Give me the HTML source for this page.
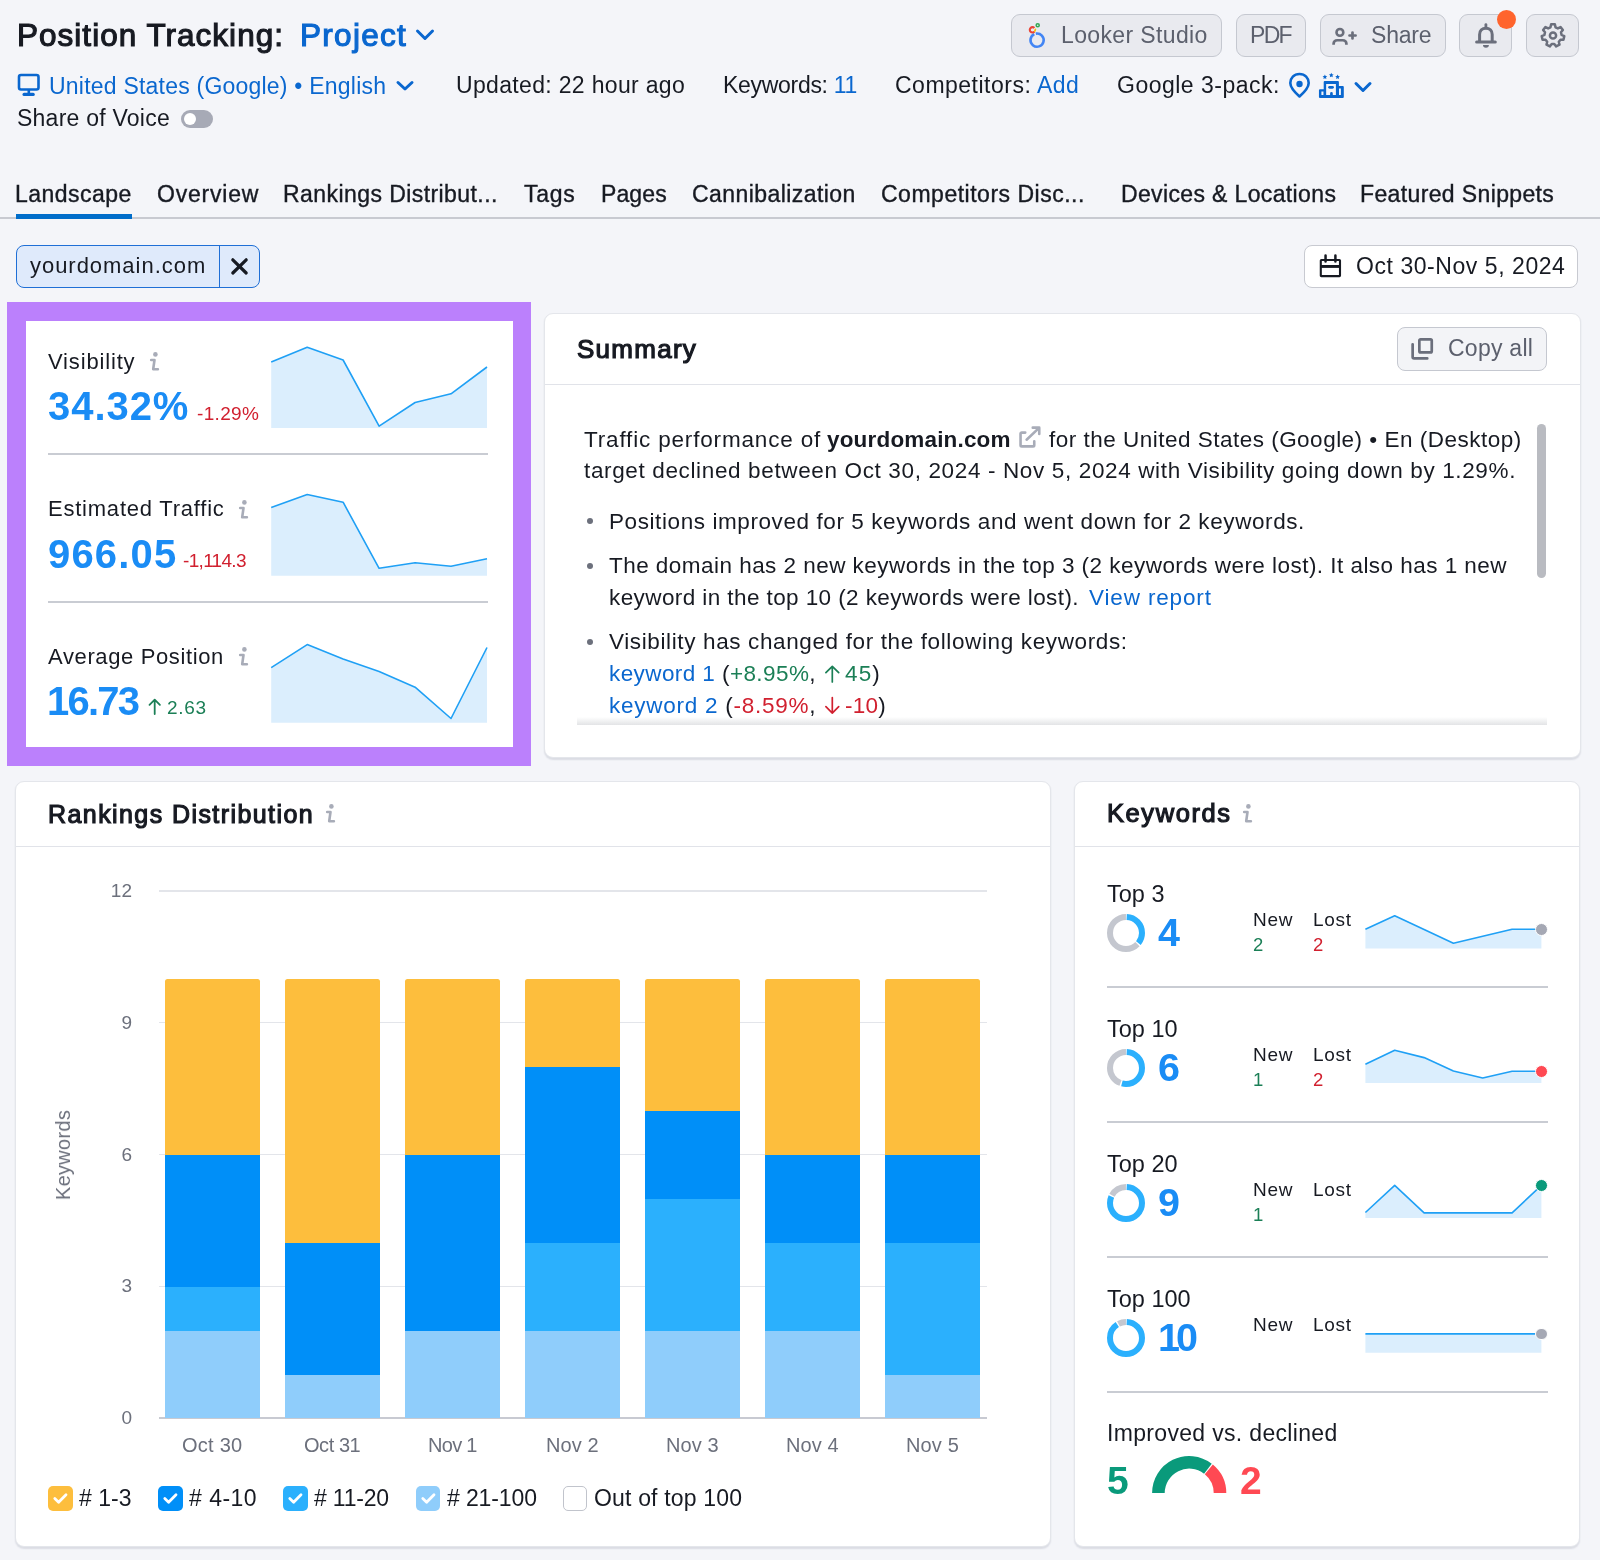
<!DOCTYPE html>
<html><head><meta charset="utf-8"><style>
html,body{margin:0;padding:0}
body{width:1600px;height:1560px;background:#f4f5f9;position:relative;overflow:hidden;font-family:"Liberation Sans",sans-serif;color:#171a22}
.a{position:absolute}
.t{position:absolute;white-space:nowrap;line-height:1;will-change:transform}
.btn{box-sizing:border-box;border:1.6px solid #c5c8d0;border-radius:9px;background:#e9eaef}
.card{box-sizing:border-box;background:#fff;border:1px solid #e4e6eb;border-radius:9px;box-shadow:0 1.5px 1.5px rgba(40,50,80,0.12)}
</style></head><body>

<svg class='a' style='left:415px;top:28px' width='20' height='14'><path d='M2.5 3 L10 10.5 L17.5 3' fill='none' stroke='#0a67cf' stroke-width='3' stroke-linecap='round' stroke-linejoin='round'/></svg>
<svg class='a' style='left:17px;top:73px' width='24' height='24'><rect x='2' y='2' width='19.5' height='14.5' rx='2' fill='none' stroke='#0a67cf' stroke-width='2.6'/><rect x='10.5' y='16' width='2.6' height='4' fill='#0a67cf'/><rect x='5.5' y='19.8' width='12.3' height='3.2' rx='1.6' fill='#0a67cf'/></svg>
<svg class='a' style='left:395px;top:79px' width='20' height='14'><path d='M3 3.5 L10 10 L17 3.5' fill='none' stroke='#0a67cf' stroke-width='3' stroke-linecap='round' stroke-linejoin='round'/></svg>
<svg class='a' style='left:1287px;top:71px' width='26' height='28'><path d='M12.5 3 C7 3 3.3 7 3.3 12 C3.3 17 8 21.5 12.5 25.5 C17 21.5 21.7 17 21.7 12 C21.7 7 18 3 12.5 3 Z' fill='none' stroke='#0a67cf' stroke-width='2.6' stroke-linejoin='round'/><circle cx='12.5' cy='13' r='3.2' fill='#0a67cf'/></svg>
<svg class='a' style='left:1314px;top:68px' width='36' height='34'>
<path fill-rule='evenodd' fill='#0a67cf' d='M4.95 28.9 V22.2 Q4.95 21.15 6 21.15 H9.7 V14 Q9.7 13.05 10.7 13.05 H23.9 Q24.9 13.05 24.9 14 V18 H28.8 Q29.8 18 29.8 19 V28.9 Q29.8 29.9 28.8 29.9 H6 Q4.95 29.9 4.95 28.9 Z M7.4 23.6 H9.45 V27 H7.4 Z M12.15 16 H21.9 V27 H18.8 V25.4 Q18.8 24.1 17.45 24.1 Q16.1 24.1 16.1 25.4 V27 H12.15 Z M25 20.5 H26.9 V27 H25 Z'/>
<rect x='14.2' y='18' width='5.7' height='2.7' rx='1.35' fill='#0a67cf'/>
<path fill='#0a67cf' d='M10.90 6.50 L11.61 8.03 L13.28 8.23 L12.04 9.37 L12.37 11.02 L10.90 10.20 L9.43 11.02 L9.76 9.37 L8.52 8.23 L10.19 8.03Z M17.30 4.70 L18.01 6.23 L19.68 6.43 L18.44 7.57 L18.77 9.22 L17.30 8.40 L15.83 9.22 L16.16 7.57 L14.92 6.43 L16.59 6.23Z M23.60 6.50 L24.31 8.03 L25.98 8.23 L24.74 9.37 L25.07 11.02 L23.60 10.20 L22.13 11.02 L22.46 9.37 L21.22 8.23 L22.89 8.03Z'/>
</svg>
<svg class='a' style='left:1353px;top:80px' width='20' height='14'><path d='M3 3.5 L10 10.5 L17 3.5' fill='none' stroke='#0a67cf' stroke-width='3' stroke-linecap='round' stroke-linejoin='round'/></svg>
<div class='a' style='left:181px;top:110px;width:32px;height:18px;border-radius:9px;background:#a7aab6'></div><div class='a' style='left:184px;top:113px;width:12px;height:12px;border-radius:6px;background:#fff'></div>
<div class='a btn' style='left:1011.4px;top:14px;width:210.60000000000002px;height:43.4px'></div>
<div class='a btn' style='left:1235.6px;top:14px;width:70.40000000000009px;height:43.4px'></div>
<div class='a btn' style='left:1320px;top:14px;width:125.59999999999991px;height:43.4px'></div>
<div class='a btn' style='left:1459.3px;top:14px;width:53.200000000000045px;height:43.4px'></div>
<div class='a btn' style='left:1526px;top:14px;width:53px;height:43.4px'></div>
<svg class='a' style='left:1024px;top:20px' width='26' height='30'>
<path d='M11.81 13.62 A6.6 6.6 0 1 1 10.28 14.12' fill='none' stroke='#4285f4' stroke-width='2.6'/>
<path d='M10.4 11.7 A2.7 2.7 0 1 1 10.4 7.9' fill='none' stroke='#ea4335' stroke-width='2.1'/>
<circle cx='13.7' cy='5.2' r='1.55' fill='none' stroke='#34a853' stroke-width='1.5'/>
<ellipse cx='11.1' cy='10.3' rx='0.95' ry='1.9' transform='rotate(20 11.1 10.3)' fill='#fbbc04'/>
</svg>
<svg class='a' style='left:1330px;top:25px' width='30' height='22'>
<circle cx='9.9' cy='7.4' r='3.4' fill='none' stroke='#6b6f7c' stroke-width='2.6'/>
<path d='M3.6 19.75 V18.8 C3.6 16.8 5.2 15.25 7.2 15.25 H12.8 C14.8 15.25 16.4 16.8 16.4 18.8 V19.75' fill='none' stroke='#6b6f7c' stroke-width='2.7'/>
<path d='M19.5 10.5 H25.6 M22.5 7.6 V13.4' stroke='#6b6f7c' stroke-width='2.7' stroke-linecap='round'/>
</svg>
<svg class='a' style='left:1473px;top:21px' width='26' height='29'>
<path d='M12.9 3.6 V6.8' stroke='#6b6f7c' stroke-width='2.8' stroke-linecap='round'/>
<path d='M6.6 21 V13.5 C6.6 9.6 9.2 7.3 12.9 7.3 C16.6 7.3 19.2 9.6 19.2 13.5 V21' fill='none' stroke='#6b6f7c' stroke-width='3'/>
<path d='M3.6 21 H22.3' stroke='#6b6f7c' stroke-width='3' stroke-linecap='round'/>
<path d='M10 24.1 H15.9 A2.95 2.7 0 0 1 10 24.1 Z' fill='#6b6f7c'/>
</svg>
<div class='a' style='left:1497px;top:10px;width:19px;height:19px;border-radius:50%;background:#ff642d'></div>
<svg class='a' style='left:1539.5px;top:22px' width='26' height='27'>
<polygon points='10.49,5.28 11.13,2.35 14.87,2.35 15.51,5.28 17.86,6.41 20.55,5.09 22.88,8.01 21.00,10.34 21.58,12.88 24.28,14.16 23.45,17.80 20.46,17.78 18.83,19.82 19.52,22.73 16.16,24.35 14.30,22.00 11.70,22.00 9.84,24.35 6.48,22.73 7.17,19.82 5.54,17.78 2.55,17.80 1.72,14.16 4.42,12.88 5.00,10.34 3.12,8.01 5.45,5.09 8.14,6.41' fill='none' stroke='#6b6f7c' stroke-width='2.5' stroke-linejoin='round'/>
<circle cx='13' cy='13.5' r='3.1' fill='none' stroke='#6b6f7c' stroke-width='2.5'/>
</svg>
<div class='a' style='left:0;top:217px;width:1600px;height:2px;background:#c8cad1'></div>
<div class='a' style='left:16px;top:214px;width:116px;height:4.7px;background:#006dca'></div>
<div class='a' style='left:16.2px;top:244.8px;width:243.5px;height:43px;box-sizing:border-box;border:1.6px solid #1f6fd6;border-radius:8px;background:#dfeafb'></div>
<div class='a' style='left:218.6px;top:245.5px;width:1.5px;height:41.5px;background:#1f6fd6'></div>
<svg class='a' style='left:230px;top:257px' width='20' height='19'><path d='M2.8 2.8 L16.2 16 M16.2 2.8 L2.8 16' stroke='#171a22' stroke-width='3.2' stroke-linecap='round'/></svg>
<div class='a' style='left:1304.4px;top:244.8px;width:274px;height:43px;box-sizing:border-box;border:1.6px solid #c8cad1;border-radius:8px;background:#fff'></div>
<svg class='a' style='left:1318px;top:252px' width='25' height='27'>
<rect x='2.8' y='8' width='19.2' height='16.1' rx='0.6' fill='none' stroke='#171a22' stroke-width='2.1'/>
<rect x='2.8' y='13' width='19.2' height='2.9' fill='#171a22'/>
<path d='M7.55 3.45 V9.55 M17.4 3.45 V9.55' stroke='#171a22' stroke-width='2.5' stroke-linecap='round'/>
</svg>
<div class='a' style='left:7.4px;top:302px;width:523.6px;height:464px;background:#bb80fc'></div>
<div class='a' style='left:26px;top:321px;width:486.6px;height:426.3px;background:#fff'></div>
<svg class='a' style='left:148px;top:350px' width='14' height='24'><circle cx='7.4' cy='4.4' r='2.3' fill='#a8acb8'/><path d='M3.2 10 H6.5 L5.2 19.3 H9.9' fill='none' stroke='#a8acb8' stroke-width='2.6' stroke-linecap='round' stroke-linejoin='round'/></svg>
<svg class='a' style='left:237px;top:497.5px' width='14' height='24'><circle cx='7.4' cy='4.4' r='2.3' fill='#a8acb8'/><path d='M3.2 10 H6.5 L5.2 19.3 H9.9' fill='none' stroke='#a8acb8' stroke-width='2.6' stroke-linecap='round' stroke-linejoin='round'/></svg>
<svg class='a' style='left:236.5px;top:645px' width='14' height='24'><circle cx='7.4' cy='4.4' r='2.3' fill='#a8acb8'/><path d='M3.2 10 H6.5 L5.2 19.3 H9.9' fill='none' stroke='#a8acb8' stroke-width='2.6' stroke-linecap='round' stroke-linejoin='round'/></svg>
<div class='a' style='left:48px;top:453.4px;width:440.3px;height:1.6px;background:#c9ccd3'></div>
<div class='a' style='left:48px;top:601.2px;width:440.3px;height:1.6px;background:#c9ccd3'></div>
<svg class='a' style='left:147px;top:697px' width='16' height='19'><path d='M7.7 17 V2.6 M2.5 7.8 L7.7 2.6 L12.9 7.8' fill='none' stroke='#1b7f56' stroke-width='1.8' stroke-linecap='round' stroke-linejoin='round'/></svg>
<div class='a card' style='left:544.0px;top:313.2px;width:1036.6px;height:445.00000000000006px'></div>
<div class='a' style='left:545.0px;top:383.6px;width:1034.6px;height:1.5px;background:#e1e3e9'></div>
<div class='a' style='left:1397.3px;top:327.2px;width:149.7px;height:43.6px;box-sizing:border-box;border:1.6px solid #c5c8d0;border-radius:8px;background:#f3f4f7'></div>
<svg class='a' style='left:1410px;top:337px' width='25' height='24'>
<rect x='9.35' y='2.35' width='12.4' height='13' rx='1.2' fill='none' stroke='#6b6f7c' stroke-width='2.7'/>
<path d='M2.65 7.25 V20 Q2.65 21.45 4.1 21.45 H17.25' fill='none' stroke='#6b6f7c' stroke-width='2.7' stroke-linecap='round'/>
</svg>
<svg class='a' style='left:1017px;top:424px' width='26' height='26'>
<path d='M8.25 8.6 H4.75 Q3.55 8.6 3.55 9.8 V21.15 Q3.55 22.35 4.75 22.35 H16.05 Q17.25 22.35 17.25 21.15 V17.35' fill='none' stroke='#a8acb8' stroke-width='2.6' stroke-linecap='round'/>
<path d='M15.75 3.65 H22.25 V9.95 M21.8 4.1 L9.6 15.7' fill='none' stroke='#a8acb8' stroke-width='2.6' stroke-linecap='round' stroke-linejoin='round'/>
</svg>
<div class='a' style='left:587px;top:517.7px;width:6px;height:6px;border-radius:50%;background:#6c707c'></div>
<div class='a' style='left:587px;top:563px;width:6px;height:6px;border-radius:50%;background:#6c707c'></div>
<div class='a' style='left:587px;top:639.2px;width:6px;height:6px;border-radius:50%;background:#6c707c'></div>
<div class='a' style='left:1537.3px;top:423.7px;width:8.7px;height:154.5px;border-radius:4.5px;background:#b9bbc1'></div>
<div class='a' style='left:577px;top:716.5px;width:970px;height:8.5px;background:linear-gradient(#fff,#e3e4e6)'></div>
<svg class='a' style='left:823px;top:664px' width='18' height='20'><path d='M9.3 17.9 V2.3 M2.9 8.7 L9.3 2.3 L15.7 8.7' fill='none' stroke='#1b7f56' stroke-width='1.7' stroke-linecap='round' stroke-linejoin='round'/></svg>
<svg class='a' style='left:823px;top:696px' width='18' height='20'><path d='M9.3 1.5 V17.1 M2.9 10.7 L9.3 17.1 L15.7 10.7' fill='none' stroke='#d1202f' stroke-width='1.7' stroke-linecap='round' stroke-linejoin='round'/></svg>
<div class='a card' style='left:14.8px;top:781.0px;width:1036.2px;height:765.5px'></div>
<div class='a' style='left:15.8px;top:845.5px;width:1034.2px;height:1.5px;background:#e1e3e9'></div>
<svg class='a' style='left:323.5px;top:801.5px' width='14' height='24'><circle cx='7.4' cy='4.4' r='2.3' fill='#a8acb8'/><path d='M3.2 10 H6.5 L5.2 19.3 H9.9' fill='none' stroke='#a8acb8' stroke-width='2.6' stroke-linecap='round' stroke-linejoin='round'/></svg>
<div class='a' style='left:158.8px;top:890.25px;width:828px;height:1.5px;background:#e3e5ea'></div>
<div class='a' style='left:158.8px;top:1021.95px;width:828px;height:1.5px;background:#e3e5ea'></div>
<div class='a' style='left:158.8px;top:1153.75px;width:828px;height:1.5px;background:#e3e5ea'></div>
<div class='a' style='left:158.8px;top:1285.65px;width:828px;height:1.5px;background:#e3e5ea'></div>
<div class='a' style='left:158.8px;top:1417px;width:828px;height:2px;background:#c8cad2'></div>
<div class='a' style='left:164.6px;top:1330.17px;width:95.7px;height:87.83px;background:#8fcdfb;'></div>
<div class='a' style='left:164.6px;top:1286.25px;width:95.7px;height:44.52px;background:#2bb0fd;'></div>
<div class='a' style='left:164.6px;top:1154.50px;width:95.7px;height:132.35px;background:#008ff8;'></div>
<div class='a' style='left:164.6px;top:978.83px;width:95.7px;height:176.27px;background:#fdbe3d;border-radius:2.5px 2.5px 0 0;'></div>
<div class='a' style='left:284.6px;top:1374.08px;width:95.7px;height:43.92px;background:#8fcdfb;'></div>
<div class='a' style='left:284.6px;top:1242.33px;width:95.7px;height:132.35px;background:#008ff8;'></div>
<div class='a' style='left:284.6px;top:978.83px;width:95.7px;height:264.10px;background:#fdbe3d;border-radius:2.5px 2.5px 0 0;'></div>
<div class='a' style='left:404.6px;top:1330.17px;width:95.7px;height:87.83px;background:#8fcdfb;'></div>
<div class='a' style='left:404.6px;top:1154.50px;width:95.7px;height:176.27px;background:#008ff8;'></div>
<div class='a' style='left:404.6px;top:978.83px;width:95.7px;height:176.27px;background:#fdbe3d;border-radius:2.5px 2.5px 0 0;'></div>
<div class='a' style='left:524.6px;top:1330.17px;width:95.7px;height:87.83px;background:#8fcdfb;'></div>
<div class='a' style='left:524.6px;top:1242.33px;width:95.7px;height:88.43px;background:#2bb0fd;'></div>
<div class='a' style='left:524.6px;top:1066.67px;width:95.7px;height:176.27px;background:#008ff8;'></div>
<div class='a' style='left:524.6px;top:978.83px;width:95.7px;height:88.43px;background:#fdbe3d;border-radius:2.5px 2.5px 0 0;'></div>
<div class='a' style='left:644.6px;top:1330.17px;width:95.7px;height:87.83px;background:#8fcdfb;'></div>
<div class='a' style='left:644.6px;top:1198.42px;width:95.7px;height:132.35px;background:#2bb0fd;'></div>
<div class='a' style='left:644.6px;top:1110.58px;width:95.7px;height:88.43px;background:#008ff8;'></div>
<div class='a' style='left:644.6px;top:978.83px;width:95.7px;height:132.35px;background:#fdbe3d;border-radius:2.5px 2.5px 0 0;'></div>
<div class='a' style='left:764.6px;top:1330.17px;width:95.7px;height:87.83px;background:#8fcdfb;'></div>
<div class='a' style='left:764.6px;top:1242.33px;width:95.7px;height:88.43px;background:#2bb0fd;'></div>
<div class='a' style='left:764.6px;top:1154.50px;width:95.7px;height:88.43px;background:#008ff8;'></div>
<div class='a' style='left:764.6px;top:978.83px;width:95.7px;height:176.27px;background:#fdbe3d;border-radius:2.5px 2.5px 0 0;'></div>
<div class='a' style='left:884.6px;top:1374.08px;width:95.7px;height:43.92px;background:#8fcdfb;'></div>
<div class='a' style='left:884.6px;top:1242.33px;width:95.7px;height:132.35px;background:#2bb0fd;'></div>
<div class='a' style='left:884.6px;top:1154.50px;width:95.7px;height:88.43px;background:#008ff8;'></div>
<div class='a' style='left:884.6px;top:978.83px;width:95.7px;height:176.27px;background:#fdbe3d;border-radius:2.5px 2.5px 0 0;'></div>
<div class='a' style='left:48px;top:1486.3px;width:24.5px;height:24.5px;border-radius:5px;background:#fdbe3d'></div>
<svg class='a' style='left:48px;top:1486.3px' width='25' height='25'><path d='M6.8 12.6 L10.6 16.3 L18 8.8' fill='none' stroke='#fff' stroke-width='2.8' stroke-linecap='round' stroke-linejoin='round'/></svg>
<div class='a' style='left:158px;top:1486.3px;width:24.5px;height:24.5px;border-radius:5px;background:#008ff8'></div>
<svg class='a' style='left:158px;top:1486.3px' width='25' height='25'><path d='M6.8 12.6 L10.6 16.3 L18 8.8' fill='none' stroke='#fff' stroke-width='2.8' stroke-linecap='round' stroke-linejoin='round'/></svg>
<div class='a' style='left:283px;top:1486.3px;width:24.5px;height:24.5px;border-radius:5px;background:#2bb0fd'></div>
<svg class='a' style='left:283px;top:1486.3px' width='25' height='25'><path d='M6.8 12.6 L10.6 16.3 L18 8.8' fill='none' stroke='#fff' stroke-width='2.8' stroke-linecap='round' stroke-linejoin='round'/></svg>
<div class='a' style='left:415.7px;top:1486.3px;width:24.5px;height:24.5px;border-radius:5px;background:#8fcdfb'></div>
<svg class='a' style='left:415.7px;top:1486.3px' width='25' height='25'><path d='M6.8 12.6 L10.6 16.3 L18 8.8' fill='none' stroke='#fff' stroke-width='2.8' stroke-linecap='round' stroke-linejoin='round'/></svg>
<div class='a' style='left:562.5px;top:1486.3px;width:24.5px;height:24.5px;box-sizing:border-box;border-radius:5px;border:1.5px solid #c1c4cc;background:#fff'></div>
<div class='a card' style='left:1073.7px;top:781.0px;width:506.70000000000005px;height:765.5px'></div>
<div class='a' style='left:1074.7px;top:845.5px;width:504.70000000000005px;height:1.5px;background:#e1e3e9'></div>
<svg class='a' style='left:1240.5px;top:801.5px' width='14' height='24'><circle cx='7.4' cy='4.4' r='2.3' fill='#a8acb8'/><path d='M3.2 10 H6.5 L5.2 19.3 H9.9' fill='none' stroke='#a8acb8' stroke-width='2.6' stroke-linecap='round' stroke-linejoin='round'/></svg>
<svg class='a' style='left:1106px;top:912.8px' width='40' height='40'>
<circle cx='20' cy='20' r='16' fill='none' stroke='#c4c7cf' stroke-width='6' stroke-dasharray='0 37.26 62.57 100.53' transform='rotate(-90 20 20)'/>
<circle cx='20' cy='20' r='16' fill='none' stroke='#2bb0fd' stroke-width='6' stroke-dasharray='0 0.70 35.16 100.53' transform='rotate(-90 20 20)'/>
</svg>
<svg class='a' style='left:1106px;top:1047.7px' width='40' height='40'>
<circle cx='20' cy='20' r='16' fill='none' stroke='#c4c7cf' stroke-width='6' stroke-dasharray='0 55.54 44.30 100.53' transform='rotate(-90 20 20)'/>
<circle cx='20' cy='20' r='16' fill='none' stroke='#2bb0fd' stroke-width='6' stroke-dasharray='0 0.70 53.44 100.53' transform='rotate(-90 20 20)'/>
</svg>
<svg class='a' style='left:1106px;top:1182.6px' width='40' height='40'>
<circle cx='20' cy='20' r='16' fill='none' stroke='#c4c7cf' stroke-width='6' stroke-dasharray='0 82.95 16.88 100.53' transform='rotate(-90 20 20)'/>
<circle cx='20' cy='20' r='16' fill='none' stroke='#2bb0fd' stroke-width='6' stroke-dasharray='0 0.70 80.85 100.53' transform='rotate(-90 20 20)'/>
</svg>
<svg class='a' style='left:1106px;top:1317.5px' width='40' height='40'>
<circle cx='20' cy='20' r='16' fill='none' stroke='#c4c7cf' stroke-width='6' stroke-dasharray='0 92.09 7.74 100.53' transform='rotate(-90 20 20)'/>
<circle cx='20' cy='20' r='16' fill='none' stroke='#2bb0fd' stroke-width='6' stroke-dasharray='0 0.70 89.99 100.53' transform='rotate(-90 20 20)'/>
</svg>
<div class='a' style='left:1107px;top:986.4000000000001px;width:440.7px;height:1.6px;background:#c9ccd3'></div>
<div class='a' style='left:1107px;top:1121.3px;width:440.7px;height:1.6px;background:#c9ccd3'></div>
<div class='a' style='left:1107px;top:1256.2px;width:440.7px;height:1.6px;background:#c9ccd3'></div>
<div class='a' style='left:1107px;top:1391.2px;width:440.7px;height:1.6px;background:#c9ccd3'></div>
<svg class='a' style='left:0;top:0' width='1600' height='1560'>
<path d='M1158.40 1493.10 A30.8 30.8 0 0 1 1207.91 1468.63' fill='none' stroke='#0a9a7b' stroke-width='12.6'/>
<path d='M1208.83 1469.37 A30.8 30.8 0 0 1 1220.00 1493.10' fill='none' stroke='#ff4953' stroke-width='12.6'/>
</svg>
<svg class='a' style='left:0;top:0' width='1600' height='1560'><polygon class='sv' points='271.2,428 271.2,362.0 307.2,347.2 343.1,360.0 379.1,426.2 415.1,402.5 451.0,393.8 487.0,367.0 487.0,428' fill='#dbeefd'/><polyline class='sv' points='271.2,362.0 307.2,347.2 343.1,360.0 379.1,426.2 415.1,402.5 451.0,393.8 487.0,367.0' fill='none' stroke='#1fa0f5' stroke-width='1.6' stroke-linejoin='round'/><polygon class='sv' points='271.2,575.8 271.2,507.5 307.2,494.5 343.1,502.2 379.1,568.3 415.1,562.8 451.0,566.3 487.0,558.8 487.0,575.8' fill='#dbeefd'/><polyline class='sv' points='271.2,507.5 307.2,494.5 343.1,502.2 379.1,568.3 415.1,562.8 451.0,566.3 487.0,558.8' fill='none' stroke='#1fa0f5' stroke-width='1.6' stroke-linejoin='round'/><polygon class='sv' points='271.2,722.8 271.2,667.6 307.2,644.6 343.1,659.0 379.1,671.4 415.1,687.2 451.0,718.5 487.0,647.5 487.0,722.8' fill='#dbeefd'/><polyline class='sv' points='271.2,667.6 307.2,644.6 343.1,659.0 379.1,671.4 415.1,687.2 451.0,718.5 487.0,647.5' fill='none' stroke='#1fa0f5' stroke-width='1.6' stroke-linejoin='round'/><polygon class='sv' points='1365.4,948.5 1365.4,929.3 1394.7,915.8 1424.1,929.5 1453.4,943.2 1482.7,936.2 1512.1,929.3 1541.4,929.3 1541.4,948.5' fill='#dbeefd'/><polyline class='sv' points='1365.4,929.3 1394.7,915.8 1424.1,929.5 1453.4,943.2 1482.7,936.2 1512.1,929.3 1541.4,929.3' fill='none' stroke='#1fa0f5' stroke-width='1.6' stroke-linejoin='round'/><polygon class='sv' points='1365.4,1083.1 1365.4,1064.3 1394.7,1050.2 1424.1,1057.6 1453.4,1071.0 1482.7,1078.0 1512.1,1071.3 1541.4,1071.3 1541.4,1083.1' fill='#dbeefd'/><polyline class='sv' points='1365.4,1064.3 1394.7,1050.2 1424.1,1057.6 1453.4,1071.0 1482.7,1078.0 1512.1,1071.3 1541.4,1071.3' fill='none' stroke='#1fa0f5' stroke-width='1.6' stroke-linejoin='round'/><polygon class='sv' points='1365.4,1218.1 1365.4,1212.5 1394.7,1185.3 1424.1,1212.9 1453.4,1212.9 1482.7,1212.9 1512.1,1212.9 1541.4,1185.3 1541.4,1218.1' fill='#dbeefd'/><polyline class='sv' points='1365.4,1212.5 1394.7,1185.3 1424.1,1212.9 1453.4,1212.9 1482.7,1212.9 1512.1,1212.9 1541.4,1185.3' fill='none' stroke='#1fa0f5' stroke-width='1.6' stroke-linejoin='round'/><polygon class='sv' points='1365.4,1352.7 1365.4,1333.9 1394.7,1333.9 1424.1,1333.9 1453.4,1333.9 1482.7,1333.9 1512.1,1333.9 1541.4,1333.9 1541.4,1352.7' fill='#dbeefd'/><polyline class='sv' points='1365.4,1333.9 1394.7,1333.9 1424.1,1333.9 1453.4,1333.9 1482.7,1333.9 1512.1,1333.9 1541.4,1333.9' fill='none' stroke='#1fa0f5' stroke-width='1.6' stroke-linejoin='round'/></svg><div class='a' style='left:1535.0px;top:922.9px;width:12.8px;height:12.8px;box-sizing:border-box;border:1.2px solid #fff;border-radius:50%;background:#a5a8b4'></div>
<div class='a' style='left:1535.0px;top:1064.8999999999999px;width:12.8px;height:12.8px;box-sizing:border-box;border:1.2px solid #fff;border-radius:50%;background:#ff4953'></div>
<div class='a' style='left:1535.0px;top:1178.8999999999999px;width:12.8px;height:12.8px;box-sizing:border-box;border:1.2px solid #fff;border-radius:50%;background:#0a9a7b'></div>
<div class='a' style='left:1535.0px;top:1327.5px;width:12.8px;height:12.8px;box-sizing:border-box;border:1.2px solid #fff;border-radius:50%;background:#a5a8b4'></div>
<div class='t' style='left:72px;width:60px;text-align:right;top:881.0px;font-size:19px;line-height:19px;color:#6c707c'>12</div>
<div class='t' style='left:72px;width:60px;text-align:right;top:1012.7px;font-size:19px;line-height:19px;color:#6c707c'>9</div>
<div class='t' style='left:72px;width:60px;text-align:right;top:1144.5px;font-size:19px;line-height:19px;color:#6c707c'>6</div>
<div class='t' style='left:72px;width:60px;text-align:right;top:1276.4px;font-size:19px;line-height:19px;color:#6c707c'>3</div>
<div class='t' style='left:72px;width:60px;text-align:right;top:1408.0px;font-size:19px;line-height:19px;color:#6c707c'>0</div>
<div class='t' style='left:62.5px;top:1154.5px;font-size:20px;color:#6c707c;transform:translate(-50%,-50%) rotate(-90deg);letter-spacing:0.3px'>Keywords</div>
<div class='t' style='left:16.95px;top:20.04px;font-size:31.5px;-webkit-text-stroke:1.13px currentColor;letter-spacing:1.021px;'>Position Tracking:</div>
<div class='t' style='left:300.36px;top:20.14px;font-size:31.5px;-webkit-text-stroke:1.13px currentColor;color:#0a67cf;letter-spacing:1.291px;'>Project</div>
<div class='t' style='left:48.71px;top:74.63px;font-size:23px;color:#0a67cf;letter-spacing:0.218px;'>United States (Google) • English</div>
<div class='t' style='left:456.31px;top:74.33px;font-size:23px;letter-spacing:0.330px;'>Updated: 22 hour ago</div>
<div class='t' style='left:723.31px;top:74.33px;font-size:23px;letter-spacing:-0.298px;'>Keywords: <span style='color:#0a67cf'>11</span></div>
<div class='t' style='left:895.31px;top:74.33px;font-size:23px;letter-spacing:0.496px;'>Competitors: <span style='color:#0a67cf'>Add</span></div>
<div class='t' style='left:1117.31px;top:74.33px;font-size:23px;letter-spacing:0.492px;'>Google 3-pack:</div>
<div class='t' style='left:16.51px;top:107.23px;font-size:23px;letter-spacing:0.236px;'>Share of Voice</div>
<div class='t' style='left:1061.31px;top:23.83px;font-size:23px;color:#5c606d;letter-spacing:0.370px;'>Looker Studio</div>
<div class='t' style='left:1249.71px;top:23.83px;font-size:23px;color:#5c606d;letter-spacing:-1.710px;'>PDF</div>
<div class='t' style='left:1370.91px;top:23.83px;font-size:23px;color:#5c606d;letter-spacing:-0.199px;'>Share</div>
<div class='t' style='left:15.31px;top:183.23px;font-size:23px;-webkit-text-stroke:0.37px currentColor;letter-spacing:0.479px;'>Landscape</div>
<div class='t' style='left:157.31px;top:183.23px;font-size:23px;-webkit-text-stroke:0.37px currentColor;letter-spacing:0.789px;'>Overview</div>
<div class='t' style='left:283.31px;top:183.23px;font-size:23px;-webkit-text-stroke:0.37px currentColor;letter-spacing:0.428px;'>Rankings Distribut...</div>
<div class='t' style='left:524.31px;top:183.23px;font-size:23px;-webkit-text-stroke:0.37px currentColor;letter-spacing:0.762px;'>Tags</div>
<div class='t' style='left:600.56px;top:183.23px;font-size:23px;-webkit-text-stroke:0.37px currentColor;letter-spacing:0.103px;'>Pages</div>
<div class='t' style='left:691.81px;top:183.23px;font-size:23px;-webkit-text-stroke:0.37px currentColor;letter-spacing:0.436px;'>Cannibalization</div>
<div class='t' style='left:880.81px;top:183.23px;font-size:23px;-webkit-text-stroke:0.37px currentColor;letter-spacing:0.506px;'>Competitors Disc...</div>
<div class='t' style='left:1120.81px;top:183.23px;font-size:23px;-webkit-text-stroke:0.37px currentColor;letter-spacing:0.361px;'>Devices &amp; Locations</div>
<div class='t' style='left:1360.31px;top:183.23px;font-size:23px;-webkit-text-stroke:0.37px currentColor;letter-spacing:0.370px;'>Featured Snippets</div>
<div class='t' style='left:30.14px;top:255.08px;font-size:22px;letter-spacing:0.968px;'>yourdomain.com</div>
<div class='t' style='left:1355.91px;top:254.63px;font-size:23px;letter-spacing:0.555px;'>Oct 30-Nov 5, 2024</div>
<div class='t' style='left:48.24px;top:350.58px;font-size:22px;letter-spacing:0.840px;'>Visibility</div>
<div class='t' style='left:48.10px;top:386.14px;font-size:40px;font-weight:700;color:#1a8cf5;letter-spacing:0.946px;'>34.32%</div>
<div class='t' style='left:197.23px;top:403.62px;font-size:19px;color:#d1202f;letter-spacing:0.327px;'>-1.29%</div>
<div class='t' style='left:48.24px;top:498.08px;font-size:22px;letter-spacing:0.774px;'>Estimated Traffic</div>
<div class='t' style='left:47.80px;top:533.54px;font-size:40px;font-weight:700;color:#1a8cf5;letter-spacing:1.171px;'>966.05</div>
<div class='t' style='left:183.43px;top:551.32px;font-size:19px;color:#d1202f;letter-spacing:-0.682px;'>-1,114.3</div>
<div class='t' style='left:47.94px;top:645.98px;font-size:22px;letter-spacing:0.626px;'>Average Position</div>
<div class='t' style='left:47.40px;top:681.04px;font-size:40px;font-weight:700;color:#1a8cf5;letter-spacing:-1.777px;'>16.73</div>
<div class='t' style='left:166.83px;top:698.22px;font-size:19px;color:#1b7f56;letter-spacing:0.685px;'>2.63</div>
<div class='t' style='left:577.12px;top:336.49px;font-size:26px;-webkit-text-stroke:1.20px currentColor;letter-spacing:1.268px;'>Summary</div>
<div class='t' style='left:1448.31px;top:336.93px;font-size:23px;color:#5c606d;letter-spacing:0.253px;'>Copy all</div>
<div class='t' style='left:584.03px;top:428.85px;font-size:22.5px;letter-spacing:0.829px;'>Traffic performance of</div>
<div class='t' style='left:826.62px;top:428.85px;font-size:22.5px;font-weight:700;letter-spacing:0.175px;'>yourdomain.com</div>
<div class='t' style='left:1049.03px;top:428.85px;font-size:22.5px;letter-spacing:0.490px;'>for the United States (Google) • En (Desktop)</div>
<div class='t' style='left:583.73px;top:460.35px;font-size:22.5px;letter-spacing:0.640px;'>target declined between Oct 30, 2024 - Nov 5, 2024 with Visibility going down by 1.29%.</div>
<div class='t' style='left:609.12px;top:510.65px;font-size:22.5px;letter-spacing:0.585px;'>Positions improved for 5 keywords and went down for 2 keywords.</div>
<div class='t' style='left:609.12px;top:554.65px;font-size:22.5px;letter-spacing:0.462px;'>The domain has 2 new keywords in the top 3 (2 keywords were lost). It also has 1 new</div>
<div class='t' style='left:609.12px;top:586.85px;font-size:22.5px;letter-spacing:0.411px;'>keyword in the top 10 (2 keywords were lost).</div>
<div class='t' style='left:1089.33px;top:586.85px;font-size:22.5px;color:#0a67cf;letter-spacing:0.856px;'>View report</div>
<div class='t' style='left:609.12px;top:630.95px;font-size:22.5px;letter-spacing:0.627px;'>Visibility has changed for the following keywords:</div>
<div class='t' style='left:609.12px;top:663.15px;font-size:22.5px;letter-spacing:0.415px;'><span style='color:#0a67cf'>keyword 1</span> (<span style='color:#1b7f56'>+8.95%</span>,</div>
<div class='t' style='left:845.23px;top:663.15px;font-size:22.5px;letter-spacing:1.159px;'><span style='color:#1b7f56'>45</span>)</div>
<div class='t' style='left:609.12px;top:695.35px;font-size:22.5px;letter-spacing:0.747px;'><span style='color:#0a67cf'>keyword 2</span> (<span style='color:#d1202f'>-8.59%</span>,</div>
<div class='t' style='left:845.23px;top:695.35px;font-size:22.5px;letter-spacing:0.240px;'><span style='color:#d1202f'>-10</span>)</div>
<div class='t' style='left:47.55px;top:801.54px;font-size:25px;-webkit-text-stroke:1.15px currentColor;letter-spacing:1.424px;'>Rankings Distribution</div>
<div class='t' style='left:182.40px;top:1435.02px;font-size:20px;color:#6c707c;letter-spacing:0.256px;'>Oct 30</div>
<div class='t' style='left:304.40px;top:1435.02px;font-size:20px;color:#6c707c;letter-spacing:-0.444px;'>Oct 31</div>
<div class='t' style='left:428.30px;top:1435.02px;font-size:20px;color:#6c707c;letter-spacing:-0.712px;'>Nov 1</div>
<div class='t' style='left:545.90px;top:1435.02px;font-size:20px;color:#6c707c;letter-spacing:0.112px;'>Nov 2</div>
<div class='t' style='left:666.40px;top:1435.02px;font-size:20px;color:#6c707c;letter-spacing:0.112px;'>Nov 3</div>
<div class='t' style='left:785.90px;top:1435.02px;font-size:20px;color:#6c707c;letter-spacing:0.112px;'>Nov 4</div>
<div class='t' style='left:906.00px;top:1435.02px;font-size:20px;color:#6c707c;letter-spacing:0.138px;'>Nov 5</div>
<div class='t' style='left:79.31px;top:1487.48px;font-size:23px;letter-spacing:0.048px;'># 1-3</div>
<div class='t' style='left:189.31px;top:1487.48px;font-size:23px;letter-spacing:0.482px;'># 4-10</div>
<div class='t' style='left:314.31px;top:1487.48px;font-size:23px;letter-spacing:-0.197px;'># 11-20</div>
<div class='t' style='left:446.71px;top:1487.48px;font-size:23px;letter-spacing:-0.119px;'># 21-100</div>
<div class='t' style='left:594.31px;top:1487.48px;font-size:23px;letter-spacing:0.169px;'>Out of top 100</div>
<div class='t' style='left:1106.73px;top:801.36px;font-size:25.5px;-webkit-text-stroke:1.17px currentColor;letter-spacing:1.580px;'>Keywords</div>
<div class='t' style='left:1106.80px;top:882.81px;font-size:23.5px;'>Top 3</div>
<div class='t' style='left:1157.82px;top:912.86px;font-size:39.5px;font-weight:700;color:#1a8cf5;'>4</div>
<div class='t' style='left:1253.18px;top:910.22px;font-size:19px;letter-spacing:0.787px;'>New</div>
<div class='t' style='left:1312.83px;top:910.22px;font-size:19px;letter-spacing:0.706px;'>Lost</div>
<div class='t' style='left:1253.19px;top:935.94px;font-size:18.5px;color:#1b7f56;'>2</div>
<div class='t' style='left:1312.85px;top:935.94px;font-size:18.5px;color:#d1202f;'>2</div>
<div class='t' style='left:1106.80px;top:1017.71px;font-size:23.5px;'>Top 10</div>
<div class='t' style='left:1157.82px;top:1047.76px;font-size:39.5px;font-weight:700;color:#1a8cf5;'>6</div>
<div class='t' style='left:1253.18px;top:1045.12px;font-size:19px;letter-spacing:0.787px;'>New</div>
<div class='t' style='left:1312.83px;top:1045.12px;font-size:19px;letter-spacing:0.706px;'>Lost</div>
<div class='t' style='left:1253.19px;top:1070.84px;font-size:18.5px;color:#1b7f56;'>1</div>
<div class='t' style='left:1312.85px;top:1070.84px;font-size:18.5px;color:#d1202f;'>2</div>
<div class='t' style='left:1106.80px;top:1152.61px;font-size:23.5px;'>Top 20</div>
<div class='t' style='left:1157.82px;top:1182.66px;font-size:39.5px;font-weight:700;color:#1a8cf5;'>9</div>
<div class='t' style='left:1253.18px;top:1180.02px;font-size:19px;letter-spacing:0.787px;'>New</div>
<div class='t' style='left:1312.83px;top:1180.02px;font-size:19px;letter-spacing:0.706px;'>Lost</div>
<div class='t' style='left:1253.19px;top:1205.74px;font-size:18.5px;color:#1b7f56;'>1</div>
<div class='t' style='left:1106.80px;top:1287.51px;font-size:23.5px;'>Top 100</div>
<div class='t' style='left:1157.82px;top:1317.56px;font-size:39.5px;font-weight:700;color:#1a8cf5;letter-spacing:-3.867px;'>10</div>
<div class='t' style='left:1253.18px;top:1314.92px;font-size:19px;letter-spacing:0.787px;'>New</div>
<div class='t' style='left:1312.83px;top:1314.92px;font-size:19px;letter-spacing:0.706px;'>Lost</div>
<div class='t' style='left:1107.41px;top:1421.83px;font-size:23px;letter-spacing:0.327px;'>Improved vs. declined</div>
<div class='t' style='left:1106.83px;top:1461.44px;font-size:39px;font-weight:700;color:#0a9a7b;'>5</div>
<div class='t' style='left:1240.43px;top:1461.44px;font-size:39px;font-weight:700;color:#ff4953;'>2</div>
</body></html>
